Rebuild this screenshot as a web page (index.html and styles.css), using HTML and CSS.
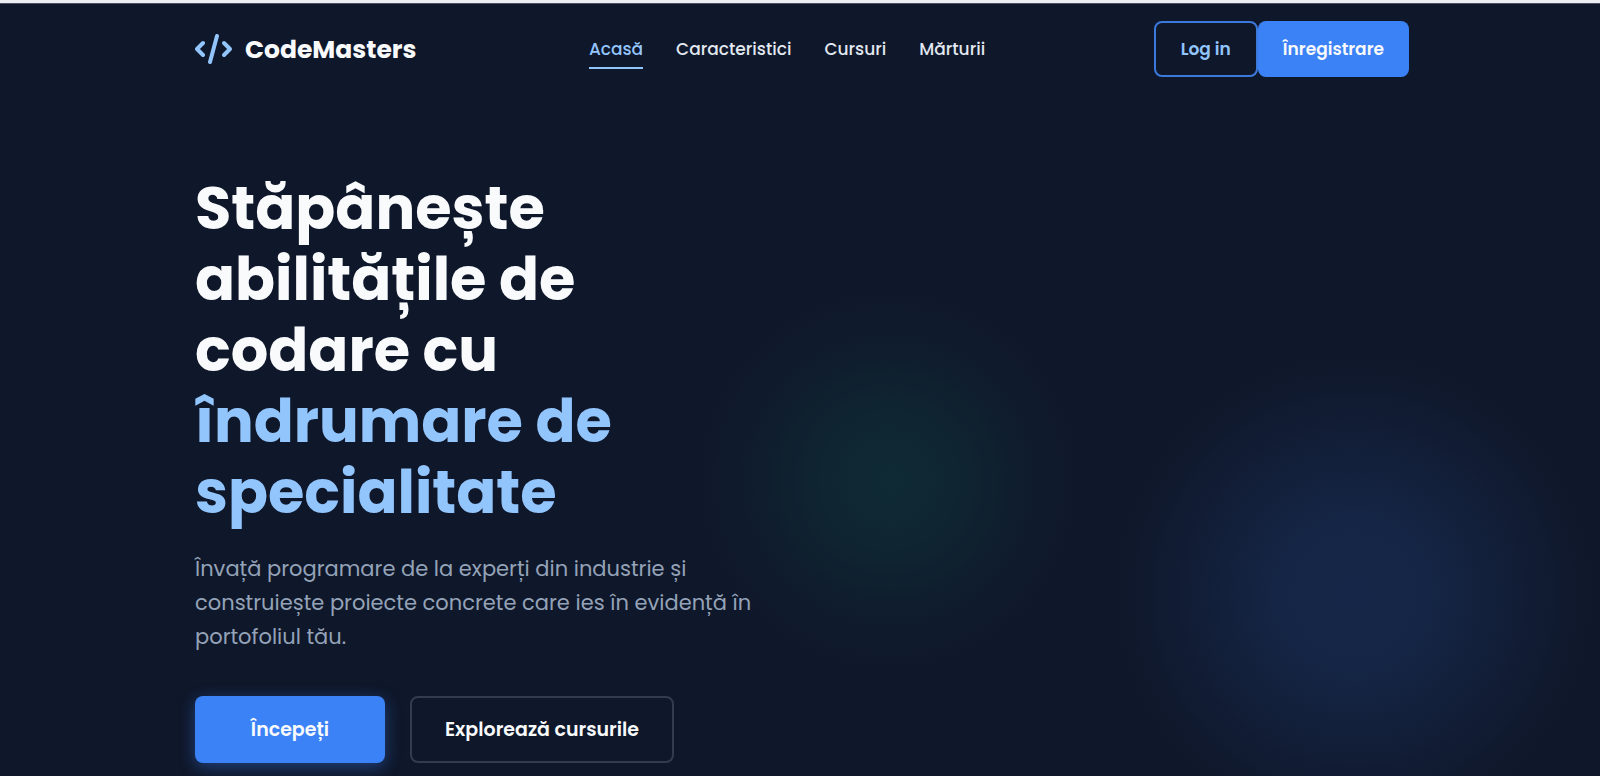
FILE: index.html
```html
<!DOCTYPE html>
<html lang="ro">
<head>
<meta charset="utf-8">
<meta name="viewport" content="width=device-width, initial-scale=1">
<title>CodeMasters</title>
<link rel="stylesheet" href="styles.css">
</head>
<body>
<header class="site-header">
  <div class="container header-row">
    <a class="brand" href="#">
      <svg class="brand-icon" viewBox="0 0 38 32" fill="none" stroke="currentColor" stroke-width="4" stroke-linecap="round" stroke-linejoin="round" aria-hidden="true">
        <path d="M8 9 L2 15 L8 21"/>
        <path d="M22 2 L15 28"/>
        <path d="M29 9 L35 15 L29 21"/>
      </svg>
      <span>CodeMasters</span>
    </a>
    <nav class="nav" aria-label="Principal">
      <a class="nav-link active" href="#acasa">Acasă</a>
      <a class="nav-link" href="#caracteristici">Caracteristici</a>
      <a class="nav-link" href="#cursuri">Cursuri</a>
      <a class="nav-link" href="#marturii">Mărturii</a>
    </nav>
    <div class="auth">
      <button class="btn btn-login" type="button">Log in</button>
      <button class="btn btn-register" type="button">Înregistrare</button>
    </div>
  </div>
</header>
<main class="hero" id="acasa">
  <div class="container">
    <div class="hero-content">
      <h1 class="hero-title">Stăpânește abilitățile de codare cu <span class="highlight">îndrumare de specialitate</span></h1>
      <p class="hero-text">Învață programare de la experți din industrie și construiește proiecte concrete care ies în evidență în portofoliul tău.</p>
      <div class="hero-actions">
        <button class="btn btn-start" type="button">Începeți</button>
        <button class="btn btn-explore" type="button">Explorează cursurile</button>
      </div>
    </div>
  </div>
</main>
</body>
</html>
```
FILE: styles.css
```css
* { box-sizing: border-box; }

body {
  margin: 0;
  min-height: 100vh;
  display: flex;
  flex-direction: column;
  overflow: hidden;
  border-top: 3px solid #eceef2;
  background: #0f172a;
  color: #f8fafc;
  font-family: Poppins, Inter, "Noto Sans", sans-serif;
}

.site-header { border-top: 1px solid #4b505c; }

.container {
  width: 100%;
  max-width: 1262px;
  margin: 0 auto;
  padding: 0 22px 0 26px;
}

.header-row {
  display: flex;
  justify-content: space-between;
  align-items: center;
  height: 90px;
}

.brand {
  display: flex;
  align-items: center;
  gap: 12px;
  padding: 2px 4px 0 0;
  color: #f8fafc;
  font-size: 25px;
  font-weight: 700;
  line-height: 40px;
  text-decoration: none;
}

.brand-icon {
  width: 38px;
  height: 32px;
  color: #93c5fd;
}

.nav {
  display: flex;
  gap: 33px;
}

.nav-link {
  padding: 8px 0 6px;
  border-bottom: 2px solid transparent;
  color: #e2e8f0;
  font-size: 17px;
  font-weight: 500;
  line-height: 24px;
  text-decoration: none;
}

.nav-link.active {
  border-bottom-color: #93c5fd;
  color: #93c5fd;
}

.auth {
  display: flex;
  justify-content: flex-end;
}

.btn {
  border: 0;
  border-radius: 8px;
  font-family: inherit;
  font-weight: 600;
  line-height: 24px;
  cursor: pointer;
}

.btn-login,
.btn-register {
  padding: 14px 25px;
  font-size: 17px;
}

.btn-login {
  border: 2px solid #3b79dc;
  background: transparent;
  color: #93c5fd;
}

.btn-register,
.btn-start {
  background: #3b82f6;
  color: #f8fafc;
}

.hero {
  flex: 1;
  padding-top: 79px;
  background:
    radial-gradient(circle 260px at 1354px 500px, rgba(59, 130, 246, 0.15), rgba(59, 130, 246, 0.13) 30%, rgba(59, 130, 246, 0.06) 63%, rgba(59, 130, 246, 0.01) 85%, transparent),
    radial-gradient(circle 210px at 889px 386px, rgba(16, 185, 129, 0.12), rgba(16, 185, 129, 0.09) 30%, rgba(16, 185, 129, 0.04) 60%, rgba(16, 185, 129, 0.01) 85%, transparent);
}

.hero-content {
  max-width: 582px;
}

.hero-title {
  max-width: 460px;
  margin: 0 0 24px;
  font-size: 59px;
  font-weight: 700;
  line-height: 71px;
}

.highlight { color: #93c5fd; }

.hero-text {
  margin: 0 0 42px;
  color: #94a3b8;
  font-size: 21px;
  line-height: 34px;
}

.hero-actions {
  display: flex;
  gap: 25px;
}

.btn-start,
.btn-explore {
  min-width: 190px;
  padding: 20px 33px;
  font-size: 19px;
  line-height: 23px;
}

.btn-start { box-shadow: 0 4px 16px rgba(59, 130, 246, 0.4); }

.btn-explore {
  border: 2px solid #343b4e;
  background: transparent;
  color: #f8fafc;
}
```
